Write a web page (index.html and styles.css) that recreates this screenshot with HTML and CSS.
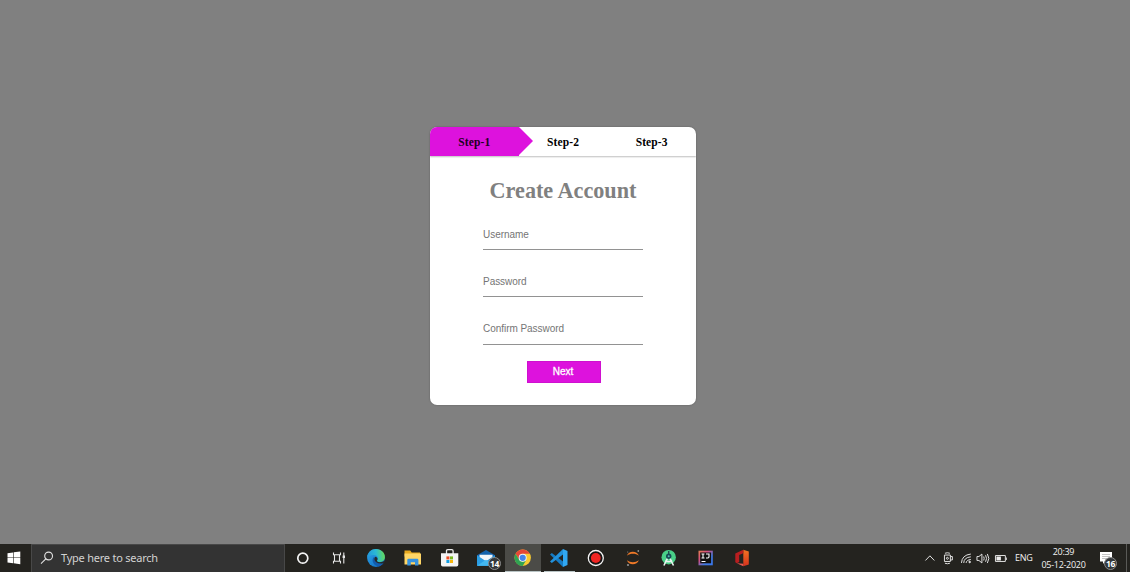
FILE: index.html
```html
<!DOCTYPE html>
<html lang="en">
<head>
<meta charset="utf-8">
<title>Create Account</title>
<link rel="stylesheet" href="styles.css">
</head>
<body>
<main class="page">
  <section class="card">
    <div class="steps">
      <div class="step step-active"><span>Step-1</span></div>
      <div class="step"><span>Step-2</span></div>
      <div class="step"><span>Step-3</span></div>
    </div>
    <form class="form">
      <h1 class="title">Create Account</h1>
      <input class="field" type="text" placeholder="Username">
      <input class="field" type="password" placeholder="Password">
      <input class="field" type="password" placeholder="Confirm Password">
      <button class="next" type="button">Next</button>
    </form>
  </section>
</main>
<footer class="taskbar">
  <div class="start">
    <svg width="14" height="14" viewBox="0 0 14 14" fill="#fff"><path d="M.5 2.200 6.100 1.400v5.100H.5zM6.700 1.300 13.300.4v6.100H6.700zM.5 7.100h5.600v5.100l-5.600-.8zM6.700 7.100h6.600v6.100l-6.600-.9z"/></svg>
  </div>
  <div class="search">
    <svg width="14" height="14" viewBox="0 0 14 14" fill="none" stroke="#e2e2e2" stroke-width="1.100"><circle cx="8.600" cy="5" r="3.900"/><path d="M5.800 7.800 1 12.700"/></svg>
    <span class="search-text">Type here to search</span>
  </div>
  <div class="apps">
    <div class="app"><svg width="20" height="20" viewBox="0 0 20 20"><circle cx="9.800" cy="10.200" r="5" fill="none" stroke="#f4f4f4" stroke-width="1.700"/></svg></div>
    <div class="app app-view"><svg width="20" height="20" viewBox="0 0 20 20" fill="none" stroke="#e6e6e6" stroke-width="1.100"><path d="M4.500 4.500v2.300h7V4.500M4.500 15.500v-2.300h7v2.300M5.500 6.800v6.400M10.500 6.800v6.400M14.800 4.500v11"/><path d="M13.600 7.500H16V10h-2.400z" fill="#e6e6e6" stroke="none"/></svg></div>
    <div class="app"><svg width="20" height="20" viewBox="0 0 20 20">
      <defs><linearGradient id="ea" x1="0" y1=".4" x2="1" y2=".3"><stop offset="0" stop-color="#2297dc"/><stop offset=".5" stop-color="#2bb9d4"/><stop offset="1" stop-color="#66dc52"/></linearGradient><linearGradient id="eb" x1="0" y1="0" x2="1" y2="1"><stop offset="0" stop-color="#2da5e8"/><stop offset="1" stop-color="#0c69c0"/></linearGradient></defs>
      <circle cx="10" cy="10" r="8.900" fill="url(#eb)"/>
      <path d="M1.100 9.500C1.600 4.500 5.300 1.100 10 1.100c5.300 0 8.900 3.700 8.900 7.900 0 3.300-2.600 5.200-5.500 5.200-2 0-3-.8-2.300-1.700 1.900-2.600.1-5.500-3.500-5.500C4.300 7 1.900 8.100 1.100 9.500Z" fill="url(#ea)"/>
      <path d="M8.100 9c-3.200 2.600-1 8.600 4.300 9.400 2.500-.4 4.400-1.900 5.400-3.900-5.400 2.200-10-.9-9.700-5.500Z" fill="#125cae"/>
      <path d="M9.300 8.800c2.200.5 2.800 2 1.800 3.500-.8 1.100.9 1.900 2.600 1.900 2 0 3.800-.6 4.900-1.700l.8 1.500-1.600.9c-3.600 1.300-8.700.3-9.400-3.100-.2-1.200.1-2.300.9-3Z" fill="#24292c"/>
    </svg></div>
    <div class="app"><svg width="20" height="20" viewBox="0 0 20 20"><path d="M1.500 2.500h5.700l1.500 2H17v4H1.500z" fill="#e8a91e"/><path d="M1.500 5.500H18v11H1.500z" fill="#ffd666"/><path d="M4.300 17.500V12q0-1.200 1.200-1.200h8.700q1.200 0 1.200 1.200v5.500h-3.400v-3.200H7.800v3.200z" fill="#3793df"/></svg></div>
    <div class="app"><svg width="20" height="20" viewBox="0 0 20 20"><path d="M6.500 6V3q0-1.300 1.300-1.300h4q1.300 0 1.300 1.300v3" fill="none" stroke="#e9e9e9" stroke-width="1.300"/><path d="M1 5.300h17.300v11.500q0 1.700-1.700 1.700H2.700Q1 18.500 1 16.800z" fill="#f4f4f4"/><path fill="#ef4c24" d="M6.400 8.400h3v3h-3z"/><path fill="#78b81e" d="M10 8.400h3v3h-3z"/><path fill="#139fe4" d="M6.400 12h3v3h-3z"/><path fill="#f8b70c" d="M10 12h3v3h-3z"/></svg></div>
    <div class="app"><svg width="20" height="20" viewBox="0 0 20 20"><path d="M1 7.200 10 2l9 5.200v10.600H1z" fill="#1262ad"/><path d="M3.500 6.800h13v3l-6.500 4-6.500-4z" fill="#f0f5fa"/><path d="m1 7.200 9 6 9-6v10.600H1z" fill="#299de4"/><path d="m1 17.800 9-6 9 6z" fill="#43b7ef"/></svg><span class="badge mail-badge">14</span></div>
    <div class="app app-open"><svg width="20" height="20" viewBox="0 0 20 20"><circle cx="9.700" cy="10.800" r="8.200" fill="#f9cb32"/><path d="M2.600 6.700a8.200 8.200 0 0 1 14.200 0H9.700l-3.500 6.100z" fill="#e64738"/><path d="M2.600 6.700A8.200 8.200 0 0 0 9.700 19l3.600-6.100-3.600 1.900-3.500-2z" fill="#31a353"/><circle cx="9.700" cy="10.800" r="4" fill="#f4f4f4"/><circle cx="9.700" cy="10.800" r="3.100" fill="#4584eb"/></svg></div>
    <div class="app app-line"><svg width="20" height="20" viewBox="0 0 20 20"><path d="m14 1 4.500 2v14L14 19z" fill="#31a8f2"/><path d="m1 6.500 1.800-1.400L14 13.500V19z" fill="#157bc4"/><path d="m1 13.500 1.800 1.400L14 6.500V1z" fill="#2292dc"/></svg></div>
    <div class="app"><svg width="20" height="20" viewBox="0 0 20 20"><circle cx="9.800" cy="10" r="7.500" fill="#151515" stroke="#f3f3f3" stroke-width="1.300"/><circle cx="9.800" cy="10" r="4.900" fill="#ef2523"/></svg></div>
    <div class="app"><svg width="20" height="20" viewBox="0 0 20 20"><path d="M4 7.800C5.300 2.500 14.300 2.500 15.800 7.800 12.500 5.200 7.300 5.200 4 7.800ZM4 12.200c1.300 5.300 10.300 5.300 11.800 0-3.300 2.600-8.500 2.600-11.800 0Z" fill="#ee7928"/><g fill="#919191"><circle cx="15.300" cy="3" r=".9"/><circle cx="4.700" cy="4" r=".6"/><circle cx="5" cy="17" r="1.100"/></g></svg></div>
    <div class="app"><svg width="20" height="20" viewBox="0 0 20 20"><circle cx="9.700" cy="9.200" r="7.200" fill="#49cf87"/><path d="m9.700 8-4.800 9.500M9.700 8l4.800 9.500M6.300 12.500q3.400 2.300 6.800 0" fill="none" stroke="#edf3f0" stroke-width="1.600"/><path d="M9 3h1.400v3H9z" fill="#244d50"/><circle cx="9.700" cy="8.200" r="2.700" fill="#174a54"/><circle cx="9.700" cy="8.200" r="1" fill="#51bdb1"/></svg></div>
    <div class="app"><svg width="20" height="20" viewBox="0 0 20 20"><defs><linearGradient id="ij" x1="0" y1="0" x2="1" y2="1"><stop stop-color="#e88050"/><stop offset=".35" stop-color="#d54d82"/><stop offset=".65" stop-color="#4479df"/><stop offset="1" stop-color="#3676ed"/></linearGradient></defs><path d="M2.500 2.700h14.300v14.600H2.500z" fill="url(#ij)"/><path d="M4.200 4.500h10.900v10.800H4.200z" fill="#111"/><path d="M5.500 6h3M7 6v4M5.500 10h3M10 6h3v2.800q0 1.200-1.200 1.200H10M5.500 13.500h4" fill="none" stroke="#fff" stroke-width="1.100"/></svg></div>
    <div class="app"><svg width="20" height="20" viewBox="0 0 20 20"><defs><linearGradient id="of" x1="0" y1="0" x2="0" y2="1"><stop stop-color="#f27523"/><stop offset="1" stop-color="#d5311d"/></linearGradient></defs><path d="m11.300 1.800 5.500 1.600v13l-5.500 1.800z" fill="url(#of)"/><path d="M3.300 5.500 11.300 1.800v3.500L7.200 7v7l-2.400 1.200-1.500-1z" fill="#b91e20"/><path d="m4.800 15.200 6.500.6v2.400z" fill="#e65a52"/></svg></div>
  </div>
  <div class="tray">
    <svg class="tray-icon" viewBox="0 0 18 18"><path d="m4.500 11.500 4.500-4.700 4.500 4.700"/></svg>
    <svg class="tray-icon" viewBox="0 0 18 18"><path d="M5.500 6h6v6.500h-6zM11.500 7.500h2V11h-2M6 4.200q2.500-1 5 0M6 14.300q2.500 1 5 0"/><circle cx="8.500" cy="9.300" r="1"/></svg>
    <svg class="tray-icon" viewBox="0 0 18 18"><path d="M4.500 14Q5 6 14 5M6.800 14Q7 8.500 14 7.800M9.200 14Q9.500 11 14 10.500"/><circle cx="12.800" cy="13" r=".8" fill="#eee"/></svg>
    <svg class="tray-icon" viewBox="0 0 18 18"><path d="M3 7.500h2l3-2.500v9l-3-2.500H3zM9.800 7.500q1 2 0 4M11.700 6.200q2 3.300 0 6.600M13.500 4.900q3 4.600 0 9.200"/></svg>
    <svg class="tray-icon" viewBox="0 0 18 18"><path d="M3.500 6.500h10v6h-10zM14.500 8.500v2.500"/><path d="M4.500 7.500H9v4H4.500z" fill="#eee" stroke="none"/></svg>
    <span class="lang">ENG</span>
    <div class="clock"><span>20:39</span><span class="date">05-12-2020</span></div>
    <div class="notes"><svg width="14" height="14" viewBox="0 0 14 14"><path d="M1 1h12v9.500H6L4 13v-2.500H1z" fill="#fff"/><path d="M3 3.500h8M3 5.500h8M3 7.500h5" stroke="#aaa" stroke-width=".7"/></svg><span class="badge notes-badge">16</span></div>
    <div class="desktop-edge"></div>
  </div>
</footer>
</body>
</html>
```
FILE: styles.css
```css
* { box-sizing: border-box; }
body {
  margin: 0;
  height: 572px;
  display: flex;
  flex-direction: column;
  overflow: hidden;
  background: #808080;
  font-family: "Liberation Sans", Arial, sans-serif;
}
.page { flex: 1; padding: 127px 0 0 430px; }
.card {
  width: 266px;
  height: 278px;
  background: #fff;
  border-radius: 7px;
  overflow: hidden;
  box-shadow: 0 0 2px rgba(0, 0, 0, .3);
}
.steps {
  display: flex;
  height: 29px;
  box-shadow: 0 1px 1.5px rgba(0, 0, 0, .25);
}
.step {
  flex: 1;
  position: relative;
  display: flex;
  align-items: center;
  justify-content: center;
  font: bold 11.5px "Liberation Serif", "Times New Roman", serif;
  letter-spacing: .12px;
  color: #000;
}
.step-active { background: #dd12dd; color: #200020; }
.step-active::after {
  content: "";
  position: absolute;
  left: 100%;
  top: 0;
  border-left: 14.5px solid #dd12dd;
  border-top: 14.5px solid transparent;
  border-bottom: 14.5px solid transparent;
}
.form { display: flex; flex-direction: column; align-items: center; }
.title {
  margin: 22px 0 18px;
  font: bold 22.2px/26px "Liberation Serif", "Times New Roman", serif;
  color: #808080;
}
.field {
  width: 160px;
  height: 28px;
  margin: 0 0 19.4px;
  padding: 0 0 3px;
  border: 0;
  border-bottom: 1px solid #929292;
  font: 10px "Liberation Sans", Arial, sans-serif;
  letter-spacing: -.04px;
  outline: 0;
}
.field::placeholder { color: #757575; opacity: 1; }
.next {
  width: 74px;
  height: 22px;
  margin-top: -3px;
  margin-left: 1px;
  padding: 0 1px 1px 0;
  border: 1px solid #cf10cf;
  background: #dd12dd;
  color: #fff;
  font: 10px "Liberation Sans", Arial, sans-serif;
  -webkit-text-stroke: .3px #fff;
}
.taskbar {
  display: flex;
  height: 28.5px;
  background: #24231f;
  color: #f2f2f2;
  font-family: "Open Sans", "Noto Sans", sans-serif;
}
.start { width: 31px; display: flex; align-items: center; padding-left: 7px; }
.search {
  width: 254px;
  display: flex;
  align-items: center;
  gap: 7px;
  padding: 0 0 1px 8px;
  background: #333;
  border: 1px solid #484848;
  border-bottom: 0;
}
.search-text { font: 11px "Noto Sans", sans-serif; color: #d2d2d2; white-space: nowrap; letter-spacing: -.23px; }
.apps { display: flex; }
.app {
  width: 36.6px;
  position: relative;
  display: flex;
  align-items: center;
  justify-content: center;
}
.app-view { padding-right: 2px; }
.app-open { background: #4b4b47; border-bottom: 1px solid #b9c4c5; }
.app-line::after {
  content: "";
  position: absolute;
  left: 3px;
  right: 3px;
  bottom: 0;
  height: 1px;
  background: #b9c4c5;
}
.badge {
  position: absolute;
  width: 13px;
  height: 13px;
  border: 1px solid #8b8b8b;
  border-radius: 50%;
  background: #34383b;
  color: #fff;
  font: bold 8.5px/11px "Open Sans", sans-serif;
  letter-spacing: -.3px;
  display: flex;
  justify-content: center;
}
.mail-badge { left: 20px; top: 13px; }
.notes-badge { left: 12px; top: 13px; }
.tray { display: flex; align-items: center; margin-left: auto; }
.tray-icon { width: 17.8px; height: 18px; fill: none; stroke: #e2e2e2; stroke-width: 1; }
.lang { width: 25px; padding-left: 5px; font-size: 9px; letter-spacing: -.3px; }
.clock {
  width: 57px;
  height: 28.5px;
  display: flex;
  flex-direction: column;
  align-items: center;
  padding-top: 1px;
  font-size: 9px;
  line-height: 13.5px;
  letter-spacing: -.3px;
}
.notes { position: relative; width: 34px; height: 28.5px; display: flex; align-items: center; padding-left: 7px; }
.desktop-edge { width: 4px; height: 28.5px; border-left: 1px solid #5a5a57; }
```
